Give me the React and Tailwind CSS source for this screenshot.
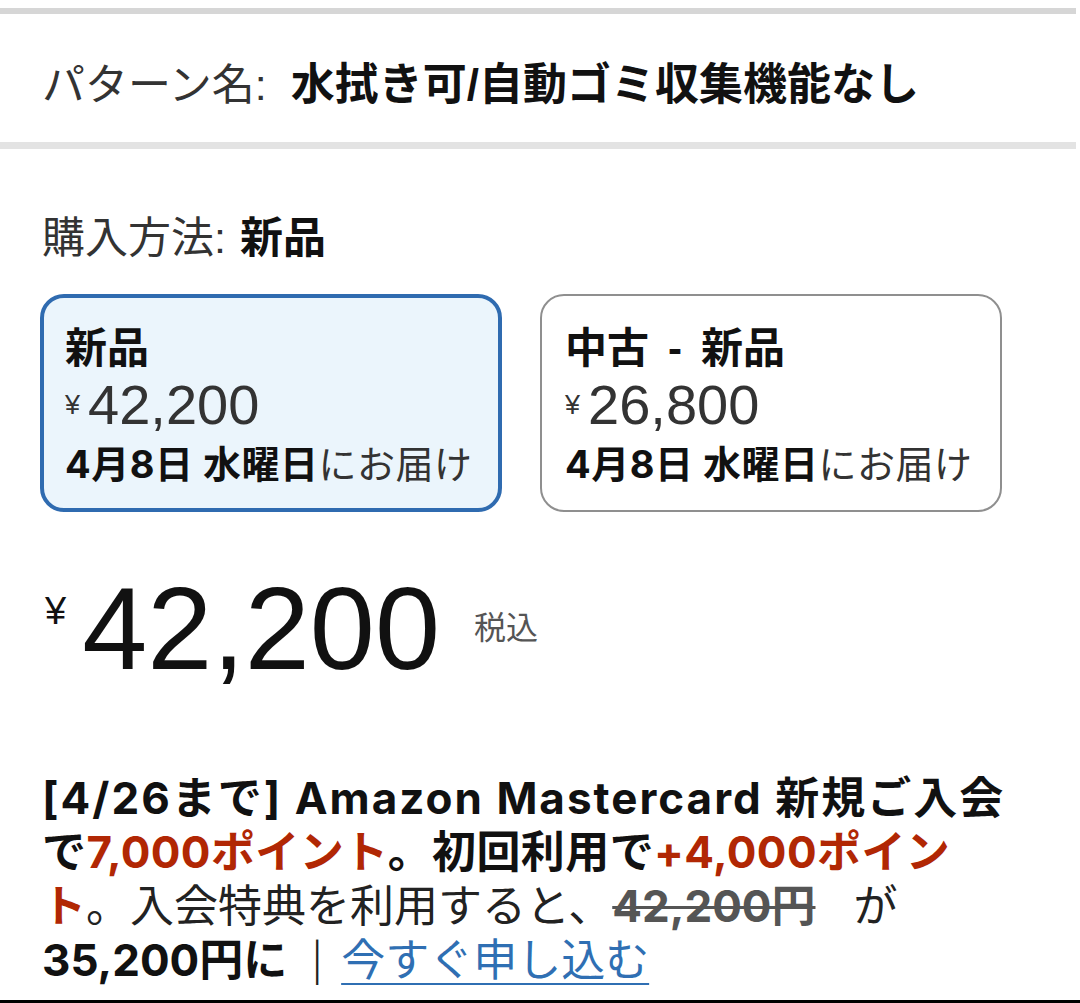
import React from "react";

const jp = { fontFamily: '"Liberation Sans", "Noto Sans CJK JP", sans-serif' };
const inter = { fontFamily: '"Inter", "Noto Sans CJK JP", sans-serif' };

function Card({ selected, title, price }) {
  return (
    <div
      className={
        selected
          ? "box-border w-[462px] h-[218px] rounded-[24px] border-[4px] border-[#2f6bb0] bg-[#ebf5fc] pl-[21px] pt-[23px] whitespace-nowrap"
          : "box-border w-[462px] h-[218px] rounded-[24px] border-[2px] border-[#8f8f8f] bg-white pl-[23px] pt-[25px] whitespace-nowrap"
      }
    >
      <div className="text-[42px] leading-[56px] font-bold text-[#111]">{title}</div>
      <div className="h-[56px] flex items-center text-[#333]">
        <span className="text-[27px] self-start mt-[8px] mr-[8px]">¥</span>
        <span className="text-[56px] leading-[56px]">{price}</span>
      </div>
      <div className="text-[38px] leading-[62px] text-[#111] tracking-[0.5px]" style={inter}>
        <span className="font-bold">4月8日 水曜日</span>
        <span className="text-[#333]">にお届け</span>
      </div>
    </div>
  );
}

export default function App() {
  return (
    <div
      className="w-[1080px] h-[1003px] bg-white overflow-hidden flex flex-col text-[#111]"
      style={jp}
    >
      {/* top rule */}
      <div className="mt-[8px] h-[6px] w-[1076px] bg-[#d6d6d6]" />

      {/* pattern name */}
      <div className="h-[128px] flex items-center pl-[42px] pt-[14px] whitespace-nowrap">
        <span className="text-[43px] leading-[50px] text-[#333]">パターン名:</span>
        <span className="text-[44px] leading-[50px] font-bold text-[#111] ml-[24px]">
          水拭き可/自動ゴミ収集機能なし
        </span>
      </div>

      {/* second rule */}
      <div className="h-[7px] w-[1076px] bg-[#e3e3e3]" />

      {/* purchase method */}
      <div className="mt-[64px] pl-[42px] text-[43px] leading-[50px] whitespace-nowrap flex">
        <span className="text-[#333]">購入方法:</span>
        <span className="font-bold text-[#111] ml-[14px]">新品</span>
      </div>

      {/* option cards */}
      <div className="mt-[31px] ml-[40px] flex gap-[38px]">
        <Card selected title="新品" price="42,200" />
        <Card
          title={
            <span>
              中古<span className="mx-[19px]">-</span>新品
            </span>
          }
          price="26,800"
        />
      </div>

      {/* big price */}
      <div className="mt-[58px] ml-[45px] flex items-start whitespace-nowrap text-[#111]">
        <span className="text-[38px] leading-none mt-[22px] mr-[16px]">¥</span>
        <span className="text-[117px] leading-none">42,200</span>
        <span className="text-[32px] leading-none mt-[42px] ml-[34px] text-[#555]">税込</span>
      </div>

      {/* promo */}
      <div
        className="mt-[84px] pl-[42px] text-[44px] leading-[54px] whitespace-nowrap text-[#111]"
        style={inter}
      >
        <span className="font-bold tracking-[2px]">{"[4/26まで] Amazon Mastercard 新規ご入会"}</span>
        <br />
        <span className="tracking-[0.4px]">
          <span className="font-bold">で</span>
          <span className="font-bold text-[#b12704]">7,000ポイント</span>
          <span className="font-bold">。初回利用で</span>
          <span className="font-bold text-[#b12704]">+4,000ポイン</span>
        </span>
        <br />
        <span className="font-bold text-[#b12704]">ト</span>
        <span className="text-[#222]">。入会特典を利用すると、</span>
        <span className="font-bold text-[#555] line-through decoration-[3px]">42,200円</span>
        <span className="text-[#222] ml-[38px]">が</span>
        <br />
        <span className="font-bold">35,200円に</span>
        <span className="text-[#222] ml-[24px] mr-[18px] inline-block text-[38px] font-light">|</span>
        <a className="text-[#2f6fb3] underline underline-offset-[7px] decoration-[2px]">今すぐ申し込む</a>
      </div>

      <div className="flex-1" />
      <div className="h-[3px] w-full bg-black" />
    </div>
  );
}
